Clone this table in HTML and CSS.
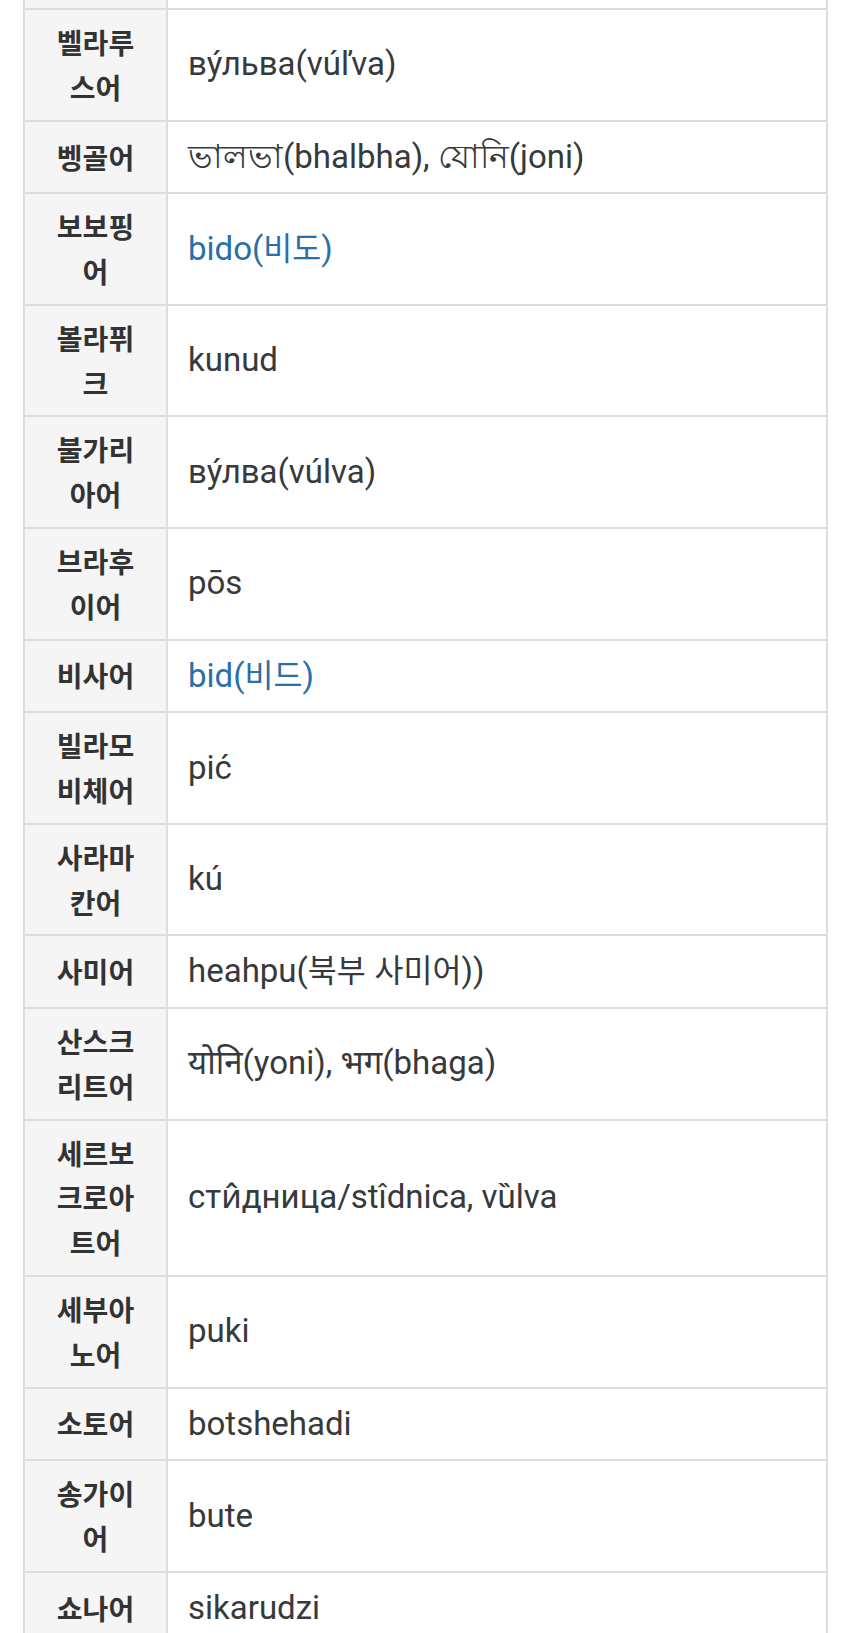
FILE: index.html
```html
<!DOCTYPE html>
<html lang="ko">
<head>
<meta charset="utf-8">
<link rel="stylesheet" href="styles.css">
</head>
<body>
<div class="page">
<table class="wt">
<tbody>
<tr class="stub"><th></th><td></td></tr>
<tr><th>벨라루스어</th><td>ву́льва(vúľva)</td></tr>
<tr><th>벵골어</th><td>ভালভা(bhalbha), যোনি(joni)</td></tr>
<tr><th>보보핑어</th><td><a class="lk" href="#">bido(<span class="ko">비도</span>)</a></td></tr>
<tr><th>볼라퓌크</th><td>kunud</td></tr>
<tr><th>불가리아어</th><td>ву́лва(vúlva)</td></tr>
<tr><th>브라후이어</th><td>pōs</td></tr>
<tr><th>비사어</th><td><a class="lk" href="#">bid(<span class="ko">비드</span>)</a></td></tr>
<tr><th>빌라모비체어</th><td>pić</td></tr>
<tr><th>사라마칸어</th><td>kú</td></tr>
<tr><th>사미어</th><td>heahpu(<span class="ko">북부 사미어</span>))</td></tr>
<tr><th>산스크리트어</th><td>योनि(yoni), भग(bhaga)</td></tr>
<tr><th>세르보크로아트어</th><td>сти̂дница/stîdnica, vȕlva</td></tr>
<tr><th>세부아노어</th><td>puki</td></tr>
<tr><th>소토어</th><td>botshehadi</td></tr>
<tr><th>송가이어</th><td>bute</td></tr>
<tr><th>쇼나어</th><td>sikarudzi</td></tr>
</tbody>
</table>
</div>
</body>
</html>
```
FILE: styles.css
```css
html, body {
  margin: 0;
  padding: 0;
  background: #ffffff;
}
.page {
  height: 1633px;
  overflow: hidden;
  padding-left: 23px;
}
.wt {
  border-collapse: collapse;
  width: 805px;
  table-layout: fixed;
  font-family: Roboto, "Noto Sans CJK KR", "Noto Sans", sans-serif;
  color: #373a3c;
}
.wt th, .wt td {
  border: 2px solid #dddddd;
  padding: 10px 0;
  vertical-align: middle;
}
.wt th {
  width: 143px;
  background: #f5f5f5;
  color: #333333;
  font-family: "Noto Sans CJK KR", sans-serif;
  font-weight: 700;
  font-size: 28px;
  line-height: 44.78px;
  text-align: center;
  padding-left: 24px;
  padding-right: 24px;
  box-sizing: border-box;
}
.wt td {
  font-size: 33px;
  line-height: 50.7px;
  text-align: left;
  padding-left: 20px;
  padding-right: 10px;
}
.wt tr.stub th, .wt tr.stub td {
  border-top: none;
  padding: 0;
  height: 8px;
  line-height: 8px;
}
.ko {
  font-family: "Noto Sans CJK KR", sans-serif;
  font-size: 31.5px;
  line-height: 1;
}
.lk {
  color: #2a6fa8;
  text-decoration: none;
}
```
